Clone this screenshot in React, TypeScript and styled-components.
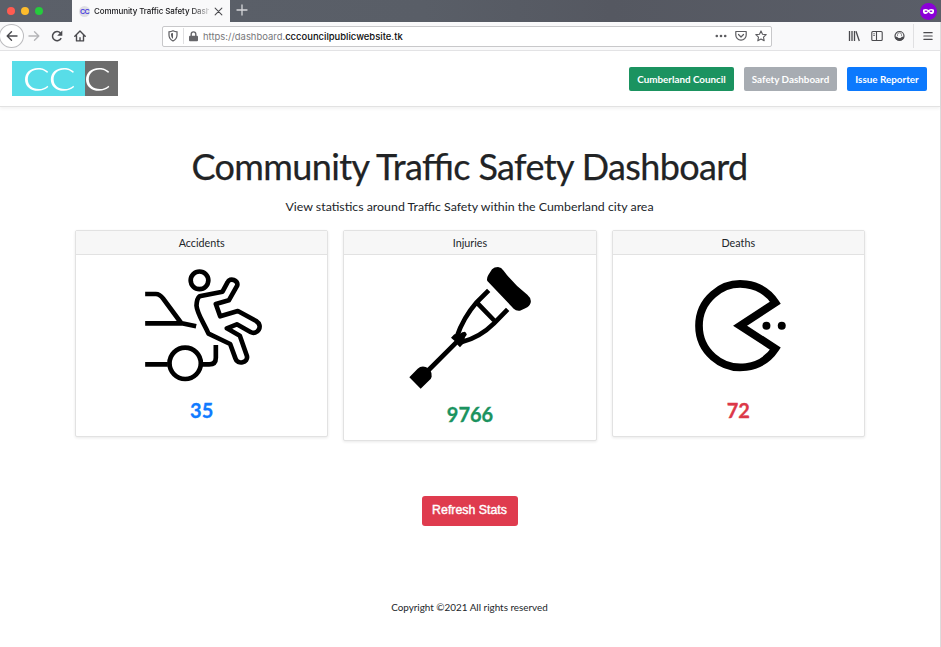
import React from "react";
import styled, { createGlobalStyle } from "styled-components";

const GlobalStyle = createGlobalStyle`
  *, *::before, *::after { box-sizing: border-box; }
  html, body, #root { height: 100%; }
  body { margin: 0; background: #fff; color: #212529; font-family: Lato, sans-serif; overflow: hidden; }
  svg { display: block; flex: none; }
`;

const Window = styled.div`
  display: flex;
  flex-direction: column;
  width: 941px;
  height: 647px;
  border-right: 1px solid #dcdcdc;
`;

const TabStrip = styled.div`
  display: flex;
  align-items: center;
  height: 22px;
  flex: none;
  margin-right: -1px;
  background: linear-gradient(90deg, #5b6069 0%, #595e67 45%, #555861 65%, #5a5e68 100%);
`;

const Lights = styled.div`
  display: flex;
  gap: 6px;
  width: 72px;
  padding-left: 7px;
`;

const Light = styled.span<{ $color: string }>`
  width: 8px;
  height: 8px;
  border-radius: 50%;
  background: ${(p) => p.$color};
`;

const Tab = styled.div`
  display: flex;
  align-items: center;
  width: 158px;
  height: 22px;
  padding-left: 7px;
  background: #f9f9fa;
`;

const Favicon = styled.span`
  width: 11px;
  height: 11px;
  border-radius: 50%;
  background: #dedee4;
  color: #4a3fe0;
  font: 700 7px/11px "Liberation Sans", sans-serif;
  letter-spacing: -0.6px;
  text-align: center;
`;

const TabTitle = styled.span`
  width: 115px;
  margin: 0 5px 0 4px;
  overflow: hidden;
  white-space: nowrap;
  color: #19191c;
  font: 500 8px/22px Inter, sans-serif;
  letter-spacing: -0.1px;
  mask-image: linear-gradient(90deg, #000 84%, transparent 104%);
`;

const NewTab = styled.div`
  flex: 1;
  padding-left: 6px;
  margin-top: -2px;
`;

const Mask = styled.div`
  margin-right: 4px;
`;

const Toolbar = styled.div`
  display: flex;
  align-items: center;
  height: 29px;
  flex: none;
  background: #f9f9fa;
  border-bottom: 1px solid #e3e3e5;
`;

const NavIcons = styled.div`
  display: flex;
  align-items: center;
  width: 162px;
`;

const BackButton = styled.span`
  display: flex;
  align-items: center;
  justify-content: center;
  width: 25px;
  height: 24px;
  margin: 0 4px 0 -1px;
  border: 1px solid #bcbcbf;
  border-radius: 50%;
  background: #fff;
`;

const IconSlot = styled.span<{ $gap: number }>`
  margin-right: ${(p) => p.$gap}px;
`;

const AddressBar = styled.div`
  display: flex;
  align-items: center;
  width: 610px;
  height: 21px;
  padding: 0 4px 0 5px;
  border: 1px solid #c8c8ca;
  border-radius: 2px;
  background: #fff;
`;

const Divider = styled.div<{ $height: number }>`
  width: 1px;
  height: ${(p) => p.$height}px;
  background: #e0e0e2;
`;

const Url = styled.span`
  flex: 1;
  padding-top: 1px;
  color: #77777a;
  font: 9.45px/19px Inter, sans-serif;
  white-space: nowrap;
  b { color: #0c0c0d; font-weight: 500; }
`;

const RightTools = styled.div`
  display: flex;
  align-items: center;
  flex: 1;
  padding-left: 76px;
`;

const SiteHeader = styled.header`
  display: flex;
  align-items: center;
  justify-content: space-between;
  height: 56px;
  flex: none;
  padding: 0 13px 0 12px;
  border-bottom: 1px solid #e2e2e2;
  box-shadow: 0 2px 3px rgba(0, 0, 0, 0.05);
`;

const Nav = styled.nav`
  display: flex;
  gap: 10px;
`;

const NavButton = styled.a<{ $bg: string; $width: number }>`
  width: ${(p) => p.$width}px;
  height: 24px;
  border-radius: 2px;
  background: ${(p) => p.$bg};
  color: #fff;
  font-size: 9.85px;
  font-weight: 700;
  line-height: 24px;
  text-align: center;
  white-space: nowrap;
`;

const Main = styled.main`
  display: flex;
  flex-direction: column;
  align-items: center;
  flex: 1;
  padding-right: 1px;
`;

const Title = styled.h1`
  margin: 37px 0 0;
  color: #212325;
  font-size: 36px;
  letter-spacing: -0.62px;
  font-variant-ligatures: common-ligatures;
  font-feature-settings: "liga" 1;
  font-weight: 400;
  line-height: 45px;
  height: 46px;
  -webkit-text-stroke: 0.25px #212325;
  white-space: nowrap;
`;

const Subtitle = styled.p`
  margin: 8px 0 0;
  font-size: 12.37px;
  line-height: 18px;
`;

const Cards = styled.div`
  display: flex;
  align-items: flex-start;
  gap: 15px;
  height: 210px;
  margin: 14px -1px 0 0;
`;

const Card = styled.section`
  display: flex;
  flex-direction: column;
  align-items: center;
  width: 253.3px;
  border: 1px solid #e2e2e2;
  border-radius: 2px;
  background: #fff;
  box-shadow: 0 1px 3px rgba(0, 0, 0, 0.09);
`;

const CardHeader = styled.h2`
  width: 100%;
  height: 24px;
  margin: 0;
  border-bottom: 1px solid #e2e2e2;
  background: #f7f7f7;
  font-size: 10.75px;
  font-weight: 400;
  line-height: 24px;
  text-align: center;
`;

const Count = styled.strong<{ $color: string }>`
  margin: 2px 0 12px;
  color: ${(p) => p.$color};
  font-size: 20px;
  line-height: 27px;
  height: 27px;
  -webkit-text-stroke: 0.3px ${(p) => p.$color};
`;

const Refresh = styled.button`
  width: 96px;
  height: 30px;
  margin-top: 56px;
  padding: 0 0 2px;
  border: 0;
  border-radius: 3px;
  background: #df3b4e;
  color: #fff;
  font: 12.35px "Liberation Sans", sans-serif;
  -webkit-text-stroke: 0.4px #fff;
`;

const Footer = styled.footer`
  margin-top: 74px;
  font-size: 9.9px;
  line-height: 14px;
`;

const LOGO_C =
  "M36 10.500C32 7.200 29 6.900 26 6.900 18 6.900 13 12 13 18.400S18 29.800 26 29.800C30 29.800 33 28.500 36.300 26L35.600 24.700C33 27 30 28.100 27 28.100 20 28.100 15.800 24 15.800 18.300S20 8.600 27 8.600C30 8.600 32.500 9.700 35.300 12Z";

const Logo = () => (
  <svg width="106" height="35" viewBox="0 0 106 35">
    <path fill="#58dde8" d="M0 0h73v35H0z" />
    <path fill="#6d6d6d" d="M73 0h33v35H73z" />
    <g fill="#fff">
      <path d={LOGO_C} />
      <path d={LOGO_C} transform="translate(25.800 0)" />
      <path d={LOGO_C} transform="translate(61 0)" />
    </g>
  </svg>
);

const AccidentIcon = () => (
  <svg width="150" height="140" viewBox="-10.5 0 450 420" fill="none" stroke="#000" strokeWidth="14" strokeLinejoin="round">
    <circle cx="207" cy="76" r="26.500" />
    <path d="M44 117h32q12 0 22 14l54 73M44 205h110l43 9" />
    <circle cx="164" cy="325" r="47" />
    <path d="M44 328h68M214 328h22q20 0 20-20V270" />
    <path d="M207 124 276 110 291 82C298 66 325 76 320 92L295 136 256 147 269 184 322 168 377 198C400 213 380 242 360 231L319 208 289 220 328 242 349 302C355 324 320 330 315 311L299 267 234 236C218 200 200 177 198 152Q199 130 207 124Z" />
  </svg>
);

const CrutchIcon = () => (
  <svg width="150" height="144" viewBox="-15 0 450 432" fill="none" stroke="#000" strokeWidth="14">
    <path fill="#000" stroke="none" d="M262 78Q259 70 265 60L276 43Q283 36 294 36Q304 37 311 47Q340 87 382 119Q395 130 392 143Q389 154 376 160L360 167Q349 169 341 161Z" />
    <path d="M266 106 230 142Q190 188 170 246M323 163 282 205Q240 247 183 262M230 142l54 56" />
    <path d="M80 351 193 238" strokeLinecap="round" />
    <path fill="#000" stroke="none" d="M153 248 163 238 177 238 187 232Q194 231 197 238L194 250 196 259 180 277 171 268 165 259Z" />
    <path fill="#000" stroke="none" d="M28 367 53 341Q63 332 77 336L89 342Q96 353 95 365Q93 372 88 376L62 401Z" />
  </svg>
);

const PacmanIcon = () => (
  <svg width="130" height="140" viewBox="-20.25 -30 390 420">
    <path d="M287 113A125 125 0 1 0 287 251L181 182Z" fill="none" stroke="#000" strokeWidth="23" />
    <circle cx="260" cy="182" r="12" />
    <circle cx="306" cy="182" r="12" />
  </svg>
);

const Line = ({ d, size = 12, color = "#4a4a4e", sw = 1.4 }: { d: string; size?: number; color?: string; sw?: number }) => (
  <svg width={size} height={size} viewBox="0 0 12 12" fill="none" stroke={color} strokeWidth={sw} strokeLinecap="round" strokeLinejoin="round">
    <path d={d} />
  </svg>
);

export default function App() {
  return (
    <Window>
      <GlobalStyle />
      <TabStrip>
        <Lights>
          <Light $color="#ff5b51" />
          <Light $color="#fdbc2c" />
          <Light $color="#25cb3d" />
        </Lights>
        <Tab>
          <Favicon>CC</Favicon>
          <TabTitle>Community Traffic Safety Dashboard</TabTitle>
          <Line size={9} sw={1.400} d="M1.500 1.500l9 9m0-9l-9 9" />
        </Tab>
        <NewTab><Line d="M1 6h10M6 1v10" color="#d5d6d9" sw={1.300} /></NewTab>
        <Mask>
          <svg width="17" height="17" viewBox="0 0 17 17">
            <circle cx="8.500" cy="8.500" r="8.500" fill="#8b00d7" />
            <path fill="#fff" d="M3 6.700q2.700-1.700 5.500.2 2.800-1.900 5.500-.2.500 4.300-2.500 4.200-1.700 0-3-1.900-1.300 1.900-3 1.900-3 .1-2.500-4.200" />
            <ellipse cx="6" cy="8.300" rx="1.400" ry=".8" fill="#8b00d7" />
            <ellipse cx="11" cy="8.300" rx="1.400" ry=".8" fill="#8b00d7" />
          </svg>
        </Mask>
      </TabStrip>
      <Toolbar>
        <NavIcons>
          <BackButton><Line d="M11 6H1.400M5.500 1.700L1.200 6l4.300 4.300" /></BackButton>
          <IconSlot $gap={11}><Line d="M1 6h9.600M6.500 1.700L10.800 6l-4.300 4.300" color="#b5b5b8" /></IconSlot>
          <IconSlot $gap={11}>
            <svg width="12" height="12" viewBox="0 0 12 12" fill="none" stroke="#4a4a4e" strokeWidth="1.500">
              <path d="M10.200 8.200A4.600 4.600 0 1 1 9.400 2.900" /><path fill="#4a4a4e" stroke="none" d="M11.300 .6v5.200H6.200z" />
            </svg>
          </IconSlot>
          <Line d="M.8 6.200L6 1l5.200 5.200M2.500 5.600v5.300h7V5.600M6 10.500V7.700" />
        </NavIcons>
        <AddressBar>
          <IconSlot $gap={5}>
            <svg width="10" height="12" viewBox="0 0 10 12"><path d="M1 1.800Q3 1.800 5 .8 7 1.800 9 1.800V5Q9 9 5 11 1 9 1 5Z" fill="none" stroke="#5c5c60" strokeWidth="1.200" /><path d="M5 3v6Q3 7.500 3 5V3.500Z" fill="#5c5c60" /></svg>
          </IconSlot>
          <IconSlot $gap={5}><Divider $height={16} /></IconSlot>
          <IconSlot $gap={5}>
            <svg width="9" height="11" viewBox="0 0 9 11"><path d="M2.200 5V3.200a2.300 2.300 0 0 1 4.600 0V5" fill="none" stroke="#66666a" strokeWidth="1.400" /><rect y="4.700" width="9" height="5.600" rx="1" fill="#66666a" /></svg>
          </IconSlot>
          <Url>https://dashboard.<b>cccouncilpublicwebsite.tk</b></Url>
          <IconSlot $gap={8}><svg width="12" height="12" viewBox="0 0 12 12" fill="#5c5c60"><circle cx="1.800" cy="6" r="1.300" /><circle cx="6" cy="6" r="1.300" /><circle cx="10.200" cy="6" r="1.300" /></svg></IconSlot>
          <IconSlot $gap={8}><Line d="M.8 1.500h10.400V5A5.200 5.200 0 0 1 .8 5ZM3.500 4.500L6 7l2.500-2.500" color="#5c5c60" sw={1.200} /></IconSlot>
          <Line d="M6 .9l1.500 3.300 3.700.4-2.700 2.500.7 3.700L6 9l-3.200 1.800.7-3.700L.8 4.600l3.700-.4z" color="#5c5c60" sw={1.100} />
        </AddressBar>
        <RightTools>
          <IconSlot $gap={11}><svg width="12" height="12" viewBox="0 0 12 12" fill="none" stroke="#4a4a4e" strokeWidth="1.300"><path d="M1.500 1v10M4 1v10M6.500 1v10M8 1.300l3.300 9.700" /></svg></IconSlot>
          <IconSlot $gap={11}><Line d="M1.800 1.500h8.400q1 0 1 1v7q0 1-1 1H1.800q-1 0-1-1v-7q0-1 1-1M5.500 1.500v9M2.800 3.800h.5M2.800 5.500h.5" sw={1.100} /></IconSlot>
          <IconSlot $gap={8}><svg width="11" height="12" viewBox="0 0 11 12"><circle cx="5.500" cy="6" r="4.500" fill="none" stroke="#4a4a4e" strokeWidth="1.200" /><path fill="#4a4a4e" d="M1 6.800h2.300C3.700 8.500 7.300 8.500 7.700 6.800H10Q9.500 10.700 5.500 10.700T1 6.800" /><path d="M3.500 6V4.700a2 2 0 0 1 4 0V6" fill="none" stroke="#4a4a4e" strokeWidth=".6" /></svg></IconSlot>
          <IconSlot $gap={9}><Divider $height={24} /></IconSlot>
          <Line size={10} d="M1 2h10M1 6h10M1 10h10" />
        </RightTools>
      </Toolbar>
      <SiteHeader>
        <Logo />
        <Nav>
          <NavButton $bg="#1b9360" $width={105}>Cumberland Council</NavButton>
          <NavButton $bg="#a7acb2" $width={93}>Safety Dashboard</NavButton>
          <NavButton $bg="#0c79fd" $width={80}>Issue Reporter</NavButton>
        </Nav>
      </SiteHeader>
      <Main>
        <Title>Community Traffic Safety Dashboard</Title>
        <Subtitle>View statistics around Traffic Safety within the Cumberland city area</Subtitle>
        <Cards>
          <Card><CardHeader>Accidents</CardHeader><AccidentIcon /><Count $color="#107bff">35</Count></Card>
          <Card><CardHeader>Injuries</CardHeader><CrutchIcon /><Count $color="#1b935f">9766</Count></Card>
          <Card><CardHeader>Deaths</CardHeader><PacmanIcon /><Count $color="#dc3848">72</Count></Card>
        </Cards>
        <Refresh>Refresh Stats</Refresh>
        <Footer>Copyright ©2021 All rights reserved</Footer>
      </Main>
    </Window>
  );
}
